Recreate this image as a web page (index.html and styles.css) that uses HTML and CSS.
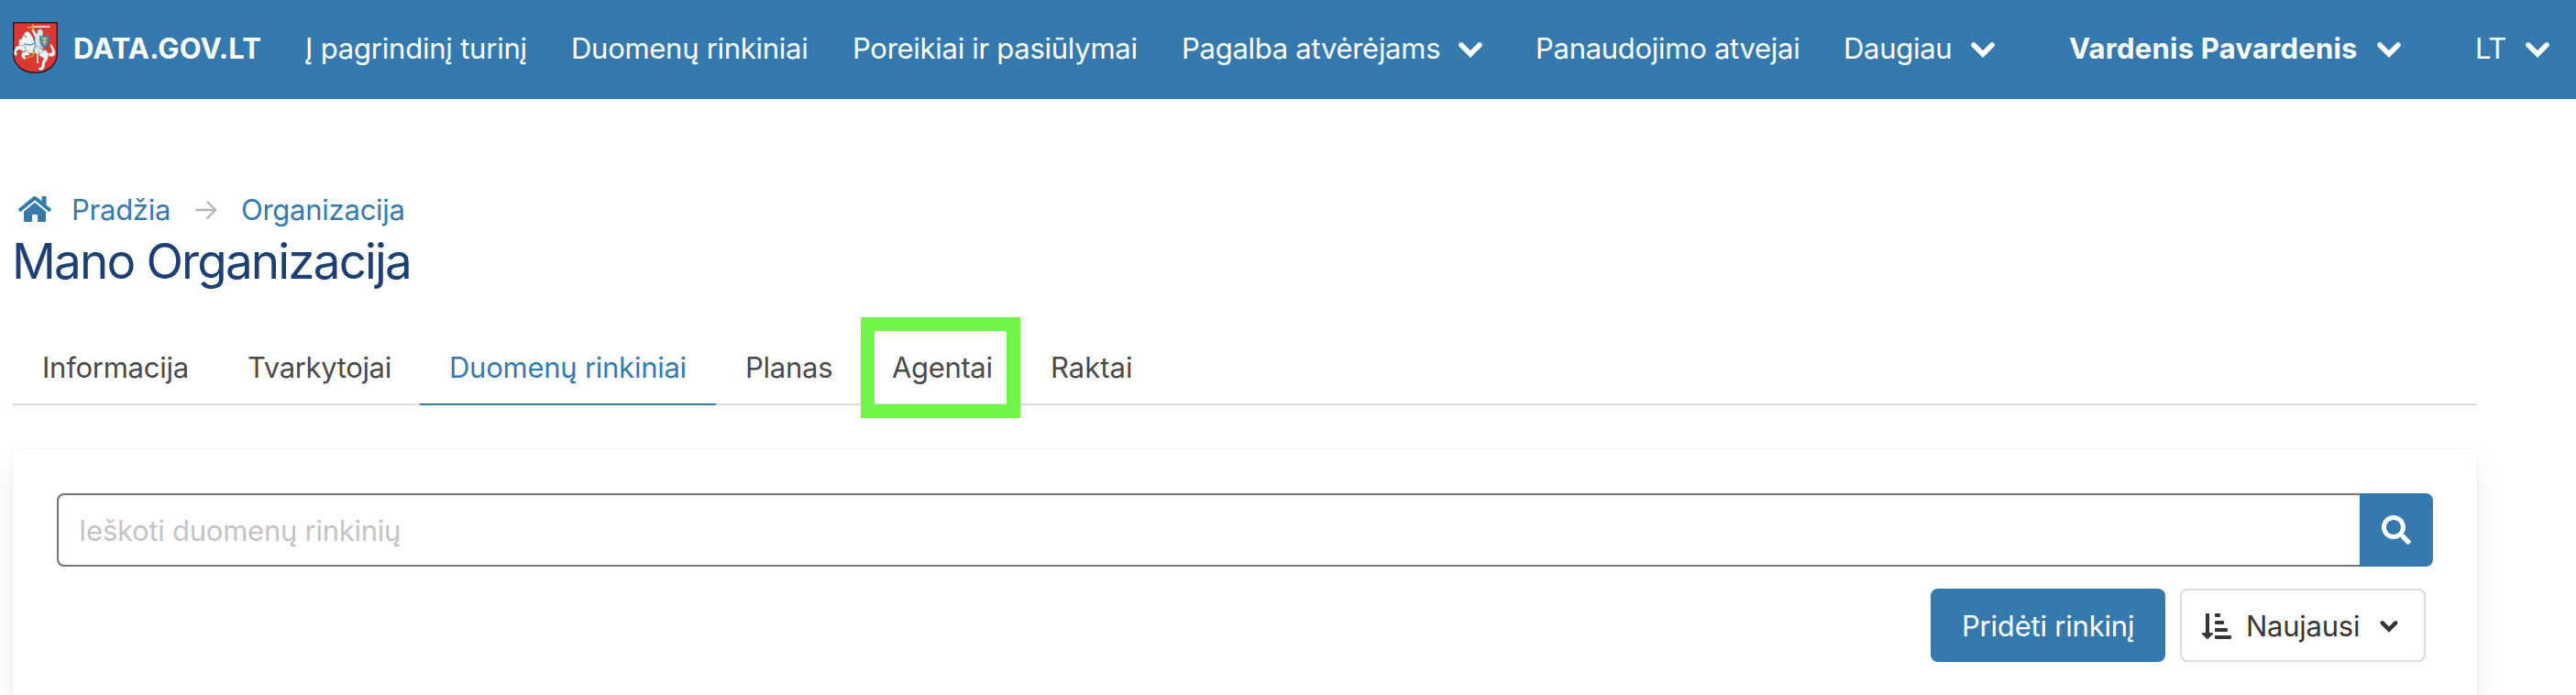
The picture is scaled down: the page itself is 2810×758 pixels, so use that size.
FILE: index.html
```html
<!DOCTYPE html>
<html lang="lt">
<head>
<meta charset="utf-8">
<title>Mano Organizacija</title>
<link rel="stylesheet" href="styles.css">
</head>
<body>
<header class="navbar">
  <svg class="crest" viewBox="0 0 49 56">
    <path d="M.7.7h47.600v34C48.300 47 38 55.300 24.500 55.300S.7 47 .7 34.700z" fill="#dc3833" stroke="#321820" stroke-width="1.400"/>
    <g fill="#f2f2ef" stroke="#7a5256" stroke-width=".5">
      <path d="M37 32c4 4 7 1 5-3-1-2-2-3-1-6 1 2 3 3 4 6 3 5 1 9-3 9-3 0-5-2-5-6z"/>
      <path d="M31 29l6 2 2 5-1 5-3 4 0 4-3 4-4-1 0-2 3-1 1-6 2-3-5-3-2-5z"/>
      <path d="M9 19l3-6 3-3 3 1 4 6 2 6 8 3 2 5-5 4-9-1-6 0-5-3-3-3 1-9-2-1z"/>
      <path d="M14 27l-6-2-5 2-2 6 1 4 3-1-1-4 3-2 6 3zM16 31l-6 2-1 4 3 4 3-1-2-3 6-1z"/>
      <path d="M20 7l3 1 3 5 1-4 3-2 3 3 0 5 0 10-4 3-5-3 0-8-3-6z" fill="#dde4e8"/>
    </g>
    <path d="M22 5.200h18.500" stroke="#f4f4f4" stroke-width="1.600"/>
    <path d="M15.500 6l6.500-.8M22 2.500v6" stroke="#e2a52c" stroke-width="1.700"/>
    <path d="M29.500 15q5 1.500 9.500-1c1 8-1 13-5 14-4-2-5-7-4.500-13z" fill="#3f91ce" stroke="#2b6f9f" stroke-width=".5"/>
    <path d="M34.500 16v9M32 18.500h5M32.500 22h4" stroke="#f5c62e" stroke-width="1.300"/>
    <path d="M12 24l7 1 6-2M12 14l3 3M25 26l-3 6M30 29l6 2" fill="none" stroke="#4b9ccc" stroke-width="1.400"/>
    <path d="M24 31l-2 6-7 2" fill="none" stroke="#cd912d" stroke-width="1.800"/>
    <path d="M27 27v18" stroke="#eef0f1" stroke-width="1.500"/>
    <path d="M28 28v14" stroke="#7d6668" stroke-width=".5"/>
  </svg>
  <span class="item brand">DATA.GOV.LT</span>
  <span class="item to-main">Į pagrindinį turinį</span>
  <span class="item datasets">Duomenų rinkiniai</span>
  <span class="item needs">Poreikiai ir pasiūlymai</span>
  <span class="item help">Pagalba atvėrėjams</span>
  <svg class="chevron after-help" viewBox="0 0 26 18"><path d="M3 4l10 10L23 4"/></svg>
  <span class="item usage">Panaudojimo atvejai</span>
  <span class="item more">Daugiau</span>
  <svg class="chevron after-more" viewBox="0 0 26 18"><path d="M3 4l10 10L23 4"/></svg>
  <span class="item user">Vardenis Pavardenis</span>
  <svg class="chevron after-user" viewBox="0 0 26 18"><path d="M3 4l10 10L23 4"/></svg>
  <span class="item lang">LT</span>
  <svg class="chevron" viewBox="0 0 26 18"><path d="M3 4l10 10L23 4"/></svg>
</header>
<main class="page">
  <nav class="breadcrumb">
    <svg class="home" viewBox="0 0 576 512"><path d="M280.370 148.260L96 300.110V464a16 16 0 0 0 16 16l112.060-.29a16 16 0 0 0 15.920-16V368a16 16 0 0 1 16-16h64a16 16 0 0 1 16 16v95.640a16 16 0 0 0 16 16.050L464 480a16 16 0 0 0 16-16V300L295.670 148.260a12.190 12.190 0 0 0-15.300 0zM571.600 251.470L488 182.560V44.050a12 12 0 0 0-12-12h-56a12 12 0 0 0-12 12v72.610L318.470 43a48 48 0 0 0-61 0L4.340 251.470a12 12 0 0 0-1.600 16.900l25.500 31A12 12 0 0 0 45.150 301l235.220-193.740a12.190 12.190 0 0 1 15.300 0L530.900 301a12 12 0 0 0 16.900-1.600l25.500-31a12 12 0 0 0-1.700-16.930z"/></svg>
    <a class="crumb crumb-home">Pradžia</a>
    <svg class="arrow" viewBox="0 0 24 20"><path d="M1.200 10h21M13.500 1.500L22.200 10l-8.700 8.500"/></svg>
    <a class="crumb crumb-org">Organizacija</a>
  </nav>
  <h1 class="title">Mano Organizacija</h1>
  <ul class="tabs">
    <li class="tab tab-info">Informacija</li>
    <li class="tab tab-managers">Tvarkytojai</li>
    <li class="tab tab-datasets active">Duomenų rinkiniai</li>
    <li class="tab tab-plan">Planas</li>
    <li class="tab tab-agents">Agentai<span class="highlight"></span></li>
    <li class="tab tab-keys">Raktai</li>
  </ul>
  <section class="card">
    <div class="search">
      <div class="field"><span class="placeholder">Ieškoti duomenų rinkinių</span></div>
      <div class="search-button">
        <svg class="magnifier" viewBox="0 0 512 512"><path d="M505 442.700L405.300 343c-4.500-4.500-10.600-7-17-7H372c27.600-35.300 44-79.700 44-128C416 93.100 322.900 0 208 0S0 93.100 0 208s93.100 208 208 208c48.300 0 92.700-16.400 128-44v16.300c0 6.400 2.500 12.500 7 17l99.700 99.700c9.400 9.400 24.600 9.400 33.900 0l28.300-28.300c9.400-9.400 9.400-24.600.1-34zM208 336c-70.700 0-128-57.200-128-128 0-70.700 57.200-128 128-128 70.700 0 128 57.200 128 128 0 70.700-57.200 128-128 128z"/></svg>
      </div>
    </div>
    <div class="actions">
      <div class="button primary"><span class="add-label">Pridėti rinkinį</span></div>
      <div class="button sort">
        <svg class="sort-icon" viewBox="0 0 512 448"><path d="M240 64h64a16 16 0 0 0 16-16V16a16 16 0 0 0-16-16h-64a16 16 0 0 0-16 16v32a16 16 0 0 0 16 16zm0 128h128a16 16 0 0 0 16-16v-32a16 16 0 0 0-16-16H240a16 16 0 0 0-16 16v32a16 16 0 0 0 16 16zm256 192H240a16 16 0 0 0-16 16v32a16 16 0 0 0 16 16h256a16 16 0 0 0 16-16v-32a16 16 0 0 0-16-16zm-256-64h192a16 16 0 0 0 16-16v-32a16 16 0 0 0-16-16H240a16 16 0 0 0-16 16v32a16 16 0 0 0 16 16zm-64 16h-48V16a16 16 0 0 0-16-16H80a16 16 0 0 0-16 16v320H16c-14.190 0-21.360 17.240-11.290 27.310l80 80a16 16 0 0 0 22.620 0l80-80C197.350 353.270 190.240 336 176 336z"/></svg>
        <span class="sort-label">Naujausi</span>
        <svg class="sort-chevron" viewBox="0 0 20 14"><path d="M2.800 3.300l7.200 7.200 7.200-7.200"/></svg>
      </div>
    </div>
  </section>
</main>
</body>
</html>
```
FILE: styles.css
```css
* { box-sizing: border-box; }
body {
  margin: 0;
  height: 758px;
  overflow: hidden;
  background: #fff;
  font-family: Inter, "Liberation Sans", sans-serif;
  font-size: 31px;
  line-height: 48px;
  white-space: nowrap;
}
.navbar {
  display: flex;
  align-items: center;
  height: 108px;
  padding: 0 0 4px 14px;
  background: #357aae;
  color: #fff;
}
.crest { width: 49px; height: 56px; margin-right: 17px; }
.item { flex: none; padding-top: 1px; letter-spacing: -0.28px; }
.brand { width: 253px; font-weight: 700; letter-spacing: 0.15px; }
.to-main { width: 290px; letter-spacing: -0.2px; }
.datasets { width: 307px; }
.needs { width: 359px; }
.help { width: 302px; }
.usage { width: 336px; }
.more { width: 139px; }
.user { width: 336px; font-weight: 700; letter-spacing: 0.25px; }
.lang { width: 55px; }
.chevron { flex: none; width: 26px; height: 18px; margin-top: 4px; }
.after-help { margin-right: 58px; }
.after-more { margin-right: 81px; }
.after-user { margin-right: 81px; }
.chevron path, .sort-chevron path { fill: none; stroke: #fff; stroke-width: 5.500; stroke-linejoin: miter; stroke-linecap: round; }
.page { width: 2702px; padding: 97px 0 0 14px; }
.breadcrumb { display: flex; align-items: center; height: 48px; padding-left: 6px; color: #357aae; }
.home { width: 36px; height: 32px; margin: -2px 22px 0 0; fill: #357aae; }
.crumb { letter-spacing: -0.25px; }
.crumb-home { width: 135px; }
.arrow { width: 24px; height: 20px; margin-right: 26px; }
.arrow path { fill: none; stroke: #b5b5b5; stroke-width: 2.400; stroke-linecap: round; stroke-linejoin: round; }
.title { margin: 0 0 0 -1px; height: 64px; font-size: 53px; line-height: 64px; font-weight: 400; color: #1c3f75; letter-spacing: -1.850px; }
.tabs { display: flex; list-style: none; margin: 43px 0 0; padding: 0; height: 82px; border-bottom: 2px solid #dbdbdb; color: #4a4a4a; }
.tab { flex: none; height: 82px; padding: 17px 0 0 32px; border-bottom: 2px solid transparent; letter-spacing: -0.25px; }
.tab-info { width: 224px; }
.tab-managers { width: 220px; letter-spacing: -0.35px; }
.tab-datasets { width: 323px; }
.tab-plan { width: 160px; }
.tab-agents { position: relative; width: 173px; letter-spacing: -0.35px; }
.tab-keys { width: 154px; letter-spacing: 0; }
.active { border-bottom-color: #357aae; color: #357aae; }
.highlight { position: absolute; left: -2px; top: -14px; width: 174px; height: 110px; border: 15px solid #70f64a; }
.card {
  margin-top: 48px;
  height: 268px;
  padding: 48px 48px 0;
  border-radius: 8px 8px 0 0;
  background: #fff;
  box-shadow: 0 16px 32px -4px rgba(10,10,10,.1), 0 0 0 2px rgba(10,10,10,.02);
}
.search { display: flex; height: 80px; }
.field { flex: 1; padding: 15px 0 0 22px; border: 2px solid #757575; border-right: 0; border-radius: 8px 0 0 8px; box-shadow: inset 0 2px 4px rgba(10,10,10,.05); color: #c4c4c4; letter-spacing: -0.25px; }
.search-button { display: flex; align-items: center; justify-content: center; width: 80px; border-radius: 0 8px 8px 0; background: #357aae; }
.magnifier { width: 32px; height: 32px; fill: #fff; }
.actions { display: flex; justify-content: flex-end; gap: 16px; margin: 24px 8px 0 0; }
.button { display: flex; align-items: center; height: 80px; padding-top: 1px; border-radius: 8px; letter-spacing: -0.25px; }
.primary { width: 256px; padding-left: 34px; background: #357aae; color: #fff; letter-spacing: -0.2px; }
.sort { width: 268px; padding-left: 22px; border: 2px solid #dbdbdb; color: #363636; }
.sort-icon { width: 32px; height: 28px; margin-right: 16px; fill: #363636; }
.sort-label { width: 146px; }
.sort-chevron { width: 20px; height: 14px; }
.sort-chevron path { stroke: #363636; stroke-width: 4.500; }
```
